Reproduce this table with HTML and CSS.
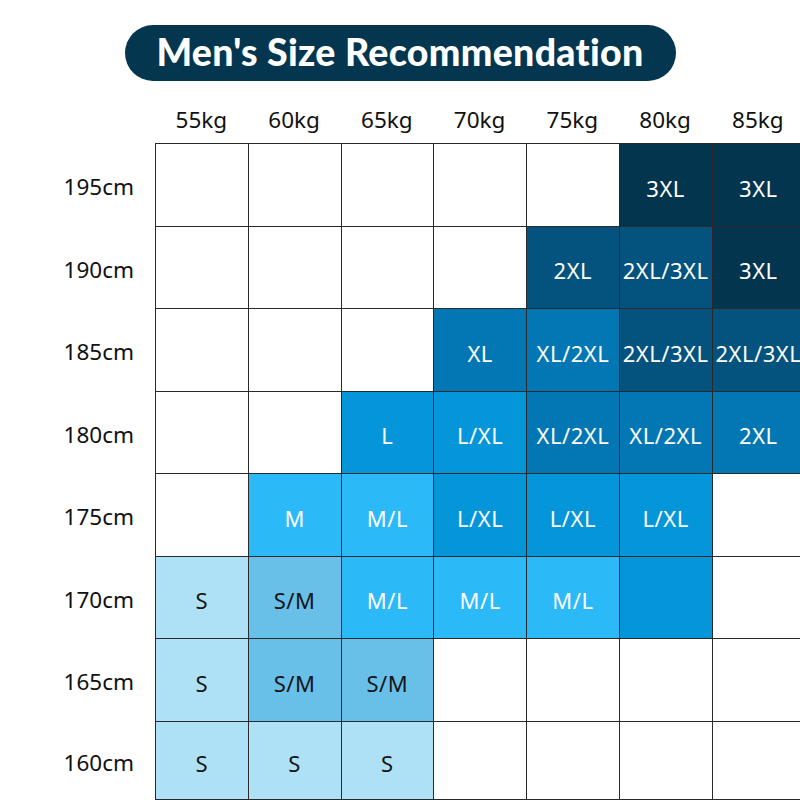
FILE: index.html
```html
<!DOCTYPE html>
<html lang="en">
<head>
<meta charset="utf-8">
<title>Men's Size Recommendation</title>
<link rel="stylesheet" href="styles.css">
</head>
<body>
<div class="page">
  <div class="title-wrap">
    <h1 class="title">Men's Size Recommendation</h1>
  </div>
  <div class="chart">
    <div class="corner"></div>
    <div class="wt">55kg</div><div class="wt">60kg</div><div class="wt">65kg</div><div class="wt">70kg</div><div class="wt">75kg</div><div class="wt">80kg</div><div class="wt">85kg</div>

    <div class="ht">195cm</div>
    <div class="cell"></div><div class="cell"></div><div class="cell"></div><div class="cell"></div><div class="cell"></div><div class="cell navy">3XL</div><div class="cell navy">3XL</div>

    <div class="ht">190cm</div>
    <div class="cell"></div><div class="cell"></div><div class="cell"></div><div class="cell"></div><div class="cell dark">2XL</div><div class="cell dark">2XL/3XL</div><div class="cell navy">3XL</div>

    <div class="ht">185cm</div>
    <div class="cell"></div><div class="cell"></div><div class="cell"></div><div class="cell mid">XL</div><div class="cell mid">XL/2XL</div><div class="cell dark">2XL/3XL</div><div class="cell dark">2XL/3XL</div>

    <div class="ht">180cm</div>
    <div class="cell"></div><div class="cell"></div><div class="cell blue">L</div><div class="cell blue">L/XL</div><div class="cell mid">XL/2XL</div><div class="cell mid">XL/2XL</div><div class="cell mid">2XL</div>

    <div class="ht">175cm</div>
    <div class="cell"></div><div class="cell sky">M</div><div class="cell sky">M/L</div><div class="cell blue">L/XL</div><div class="cell blue">L/XL</div><div class="cell blue">L/XL</div><div class="cell"></div>

    <div class="ht">170cm</div>
    <div class="cell pale">S</div><div class="cell pale2">S/M</div><div class="cell sky">M/L</div><div class="cell sky">M/L</div><div class="cell sky">M/L</div><div class="cell blue"></div><div class="cell"></div>

    <div class="ht">165cm</div>
    <div class="cell pale">S</div><div class="cell pale2">S/M</div><div class="cell pale2">S/M</div><div class="cell"></div><div class="cell"></div><div class="cell"></div><div class="cell"></div>

    <div class="ht">160cm</div>
    <div class="cell pale last">S</div><div class="cell pale last">S</div><div class="cell pale last">S</div><div class="cell last"></div><div class="cell last"></div><div class="cell last"></div><div class="cell last"></div>
  </div>
</div>
</body>
</html>
```

FILE: styles.css
```css
html, body {
  margin: 0;
  padding: 0;
  background: #ffffff;
}

.page {
  width: 800px;
  height: 800px;
  overflow: hidden;
  font-family: "Noto Sans", "Open Sans", sans-serif;
  color: #111;
}

.title-wrap {
  display: flex;
  justify-content: center;
  padding-top: 25px;
}

.title {
  margin: 0;
  width: 551px;
  height: 56px;
  box-sizing: border-box;
  padding-bottom: 3px;
  border-radius: 28px;
  background: #04374f;
  color: #ffffff;
  font-family: "Lato", "Liberation Sans", sans-serif;
  font-weight: 900;
  font-size: 37.5px;
  line-height: 53px;
  text-align: center;
  letter-spacing: 0.3px;
}

.chart {
  display: grid;
  grid-template-columns: 155px repeat(7, 92.75px);
  grid-template-rows: 62px repeat(7, 82.5px) 79px;
  width: 805px;
}

.wt {
  display: flex;
  align-items: flex-end;
  justify-content: center;
  padding-bottom: 9px;
  font-size: 22.5px;
  line-height: 28px;
}

.ht {
  display: flex;
  align-items: center;
  justify-content: flex-end;
  padding-top: 6px;
  padding-right: 21px;
  font-size: 22.5px;
  line-height: 28px;
}

.cell {
  display: flex;
  align-items: center;
  justify-content: center;
  padding-top: 6px;
  box-sizing: border-box;
  border-left: 1px solid #2a2a2a;
  border-top: 1px solid #2a2a2a;
  background: #ffffff;
  font-size: 22px;
  line-height: 28px;
  letter-spacing: 0.5px;
  white-space: nowrap;
  color: #ffffff;
}

.cell.last {
  border-bottom: 1px solid #2a2a2a;
}

.navy { background: #03354e; }
.dark { background: #03537e; }
.mid { background: #0277b4; }
.blue { background: #0496d9; }
.sky { background: #2bb9f7; }
.pale2 { background: #68bfe8; color: #151515; }
.pale { background: #aee0f6; color: #151515; }
```
